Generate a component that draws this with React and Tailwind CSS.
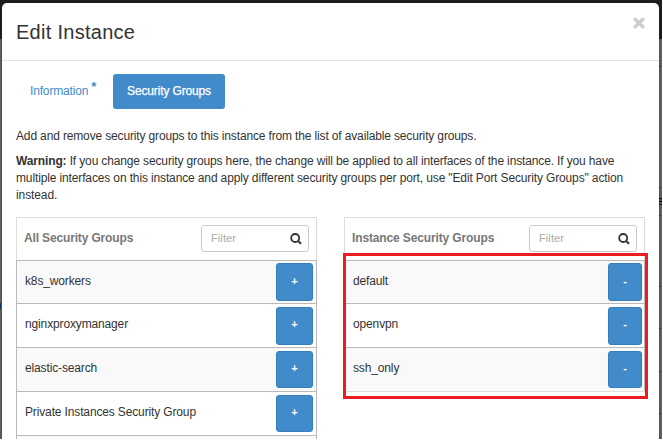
function SearchIcon() {
  return (
    <svg width="12" height="12" viewBox="0 0 12 12" fill="none" stroke="#333" className="shrink-0 translate-y-px">
      <circle cx="5.2" cy="5" r="4" strokeWidth="1.8" />
      <path d="M8 7.9L11.1 10.8" strokeWidth="2" />
    </svg>
  );
}

function CloseIcon() {
  return (
    <svg width="12" height="12" viewBox="0 0 12 12" stroke="#ccc" strokeWidth="3.4" strokeLinecap="round" className="absolute top-[14px] right-[14px]">
      <path d="M2.2 2.2L9.8 9.8M9.8 2.2L2.2 9.8" />
    </svg>
  );
}

function Group({ title, titleClass, items, sign, buttonClass, pad, end }) {
  return (
    <section className="flex w-[301px] flex-col">
      <header className="flex h-[43px] shrink-0 items-center justify-between border border-b-0 border-[#ddd] pr-[7px] pl-[7px]">
        <h2 className={"-translate-y-px font-bold whitespace-nowrap text-[#777] " + titleClass}>{title}</h2>
        <div className="mb-[2px] flex h-[27px] w-[108px] items-center justify-between rounded-[3px] border border-[#ccc] pr-[6px] pl-[9px]">
          <span className="text-[11px] tracking-[0.1px] text-[#aaa]">Filter</span>
          <SearchIcon />
        </div>
      </header>
      {items.map((item, i) => (
        <div
          key={item}
          className={
            "flex shrink-0 items-center justify-between border-x border-t border-[#b9b9b9] pl-[8px] " +
            (i === 0 ? "h-[43px] " : "h-[44px] ") + pad + (i % 2 ? " bg-white" : " bg-[#f9f9f9]")
          }
        >
          <span className={"tracking-[-0.14px] whitespace-nowrap " + (i === 0 ? "-translate-y-px" : "-translate-y-[2px]")}>{item}</span>
          {item && (
            <span className={"flex items-center justify-center rounded-[3px] border border-[#357ebd] bg-[#428bca] text-[11px] font-bold text-white " + (i < 2 ? "h-[38px] " : "h-[37px] ") + buttonClass}>
              <span className="-translate-y-px">{sign}</span>
            </span>
          )}
        </div>
      ))}
      {end && <div className="h-px bg-[#ddd]" />}
    </section>
  );
}

const available = ["k8s_workers", "nginxproxymanager", "elastic-search", "Private Instances Security Group", ""];
const assigned = ["default", "openvpn", "ssh_only"];

export default function App() {
  return (
    <div className="h-[445px] w-[663px] overflow-hidden bg-white font-['Liberation_Sans',Arial,sans-serif] text-[12px] text-[#333]">
      <div className="relative flex h-[439px] w-[662px] flex-col overflow-hidden bg-[#626262] pt-[3px] pl-[2px]">
        <div className="absolute inset-x-0 top-0 h-[39px] bg-[#1c1d20]" />
        <div className="absolute top-[66px] right-0 h-px w-[3px] bg-[#484848]" />
        <div className="absolute top-[187px] right-0 h-px w-[3px] bg-[#484848]" />
        <div className="absolute top-[194px] left-[657px] text-[12px] leading-[14px] text-black">e</div>
        <div className="absolute top-[215px] right-0 h-px w-[3px] bg-[#484848]" />
        <div className="absolute top-[286px] right-0 h-px w-[3px] bg-[#484848]" />
        <div className="absolute top-[328px] right-0 h-px w-[3px] bg-[#484848]" />
        <div className="absolute top-[371px] right-0 h-px w-[3px] bg-[#484848]" />
        <div className="absolute top-[413px] right-0 h-px w-[3px] bg-[#484848]" />
        <div className="absolute top-[303px] left-0 h-[6px] w-[1px] bg-[#12396b]" />
        <main className="relative h-[440px] w-[657px] shrink-0 rounded-t-[5px] bg-white shadow-[0_0_2px_#222]">
          <header className="flex h-[58px] items-center border-b border-[#e2e2e2] pl-[14px]">
            <h1 className="text-[20px] leading-[24px] tracking-[0.28px]">Edit Instance</h1>
            <CloseIcon />
          </header>
          <nav className="flex pt-[13px] pl-[28px]">
            <div className="flex h-[35px] w-[83px] items-center text-[#428bca]">
              <span className="-translate-y-px tracking-[-0.16px]">Information</span>
              <sup className="top-[-5px] ml-[3px] text-[13px] leading-none font-bold">*</sup>
            </div>
            <div className="flex h-[35px] w-[112px] items-center justify-center rounded-[3px] bg-[#428bca] text-white [-webkit-text-stroke:0.25px_white]">
              <span className="-translate-y-px tracking-[-0.14px]">Security Groups</span>
            </div>
          </nav>
          <div className="pt-[19px] pl-[14px] leading-[17px] whitespace-nowrap">
            <p className="tracking-[-0.145px]">Add and remove security groups to this instance from the list of available security groups.</p>
            <p className="mt-[8px] tracking-[-0.138px]"><b>Warning:</b> If you change security groups here, the change will be applied to all interfaces of the instance. If you have</p>
            <p className="tracking-[-0.134px]">multiple interfaces on this instance and apply different security groups per port, use "Edit Port Security Groups" action</p>
            <p className="tracking-[-0.1px]">instead.</p>
          </div>
          <div className="flex gap-[27px] pt-[13px] pl-[14px]">
            <Group title="All Security Groups" titleClass="tracking-[-0.15px]" items={available} sign="+" buttonClass="w-[37px]" pad="pr-[3px]" />
            <Group title="Instance Security Groups" titleClass="tracking-[-0.13px]" items={assigned} sign="-" buttonClass="w-[34px]" pad="pr-[2px]" end />
          </div>
        </main>
        <div className="absolute top-[253px] left-[343px] h-[146px] w-[305px] border-[3px] border-[#ed1c24]" />
      </div>
    </div>
  );
}
